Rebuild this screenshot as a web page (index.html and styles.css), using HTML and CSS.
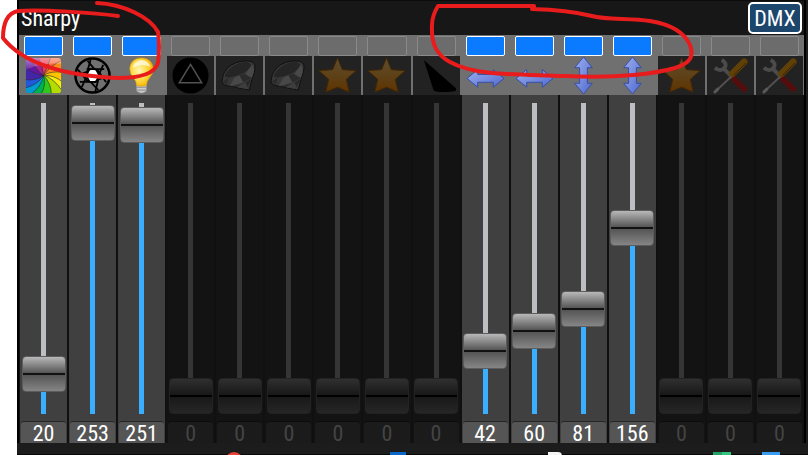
FILE: index.html
```html
<!DOCTYPE html>
<html lang="en">
<head>
<meta charset="UTF-8">
<meta name="viewport" content="width=device-width, initial-scale=1.0">
<title>Sharpy</title>
<link rel="stylesheet" href="styles.css">
</head>
<body>
<svg class="defs" aria-hidden="true">
    <defs>
        <linearGradient id="arrow-fill" x1="0" y1="0" x2="1" y2="1">
            <stop offset="0" stop-color="#9db0f0"/>
            <stop offset="1" stop-color="#4f68cc"/>
        </linearGradient>
        <linearGradient id="star-fill" x1="0" y1="0" x2="0" y2="1">
            <stop offset="0" stop-color="#e8c478"/>
            <stop offset="1" stop-color="#ee8200"/>
        </linearGradient>
        <radialGradient id="bulb-fill" cx=".4" cy=".45" r=".6">
            <stop offset="0" stop-color="#fff6b8"/>
            <stop offset=".5" stop-color="#ffdf50"/>
            <stop offset="1" stop-color="#f8b400"/>
        </radialGradient>
        <linearGradient id="gloss" x1="0" y1="0" x2="0" y2="1">
            <stop offset="0" stop-color="#fff" stop-opacity=".45"/>
            <stop offset="1" stop-color="#fff" stop-opacity=".1"/>
        </linearGradient>
        <clipPath id="square"><rect x="2" y="2" width="36" height="36" rx="3"/></clipPath>
    </defs>
    <symbol id="color" viewBox="0 0 40 40">
        <g clip-path="url(#square)" stroke="#222" stroke-opacity=".55" stroke-width=".7">
            <path fill="#e8384f" d="M20 20Q19 9 14 0H28Q25 10 20 20z"/>
            <path fill="#fb6540" d="M20 20Q25 10 28 0H40V4Q28 9 20 20z"/>
            <path fill="#ff8c1a" d="M20 20Q28 9 40 4V17Q28 15 20 20z"/>
            <path fill="#ffc400" d="M20 20Q28 15 40 17V27Q30 19 20 20z"/>
            <path fill="#f4ee10" d="M20 20Q30 19 40 27V37Q30 22 20 20z"/>
            <path fill="#b4dc00" d="M20 20Q30 22 40 37V40H28Q28 28 20 20z"/>
            <path fill="#2fc91c" d="M20 20Q28 28 28 40H17Q23 30 20 20z"/>
            <path fill="#00b44c" d="M20 20Q23 30 17 40H6Q18 32 20 20z"/>
            <path fill="#009bd0" d="M20 20Q18 32 6 40H0V33Q14 30 20 20z"/>
            <path fill="#2159dc" d="M20 20Q14 30 0 33V24Q12 26 20 20z"/>
            <path fill="#4325a8" d="M20 20Q12 26 0 24V10Q10 19 20 20z"/>
            <path fill="#6417a0" d="M20 20Q10 19 0 10V0H5Q12 14 20 20z"/>
            <path fill="#9d2493" d="M20 20Q12 14 5 0H14Q19 9 20 20z"/>
        </g>
        <path fill="url(#gloss)" d="M2 5q0-3 3-3h30q3 0 3 3v3Q20 6 2 14z"/>
    </symbol>
    <symbol id="iris" viewBox="0 0 40 40">
        <circle cx="20" cy="20" r="6" fill="#fff"/>
        <g fill="none" stroke="#000" stroke-width="1.800">
            <circle cx="20" cy="20" r="17.500" stroke-width="2.600"/>
            <path d="M17 13.500h6.500L27 20l-3.500 6.500H17L13.500 20z"/>
            <path d="M14 13.500H32M25 14L34 27M27 20L23 36M24 26.500H7M16 27L5 14M13.500 20L18 4"/>
            <path d="M22 13.500L15 5M27 18L31 9M26 24L36 21M18 26.500L26 35M13.500 22L9 32M15 16L4 20"/>
        </g>
    </symbol>
    <symbol id="bulb" viewBox="0 0 40 40">
        <path fill="#ccc" stroke="#999" stroke-width=".5" d="M15 29h10v7q-5 4-10 0z"/>
        <path stroke="#888" d="M15 32h10M15 35h10"/>
        <path fill="url(#bulb-fill)" stroke="#dfa000" stroke-width=".6" d="M15 30q0-4-3.500-8Q8 18 8 13.500C8 6 13.500 2 20 2s12 4 12 11.500q0 4.500-3.500 8.500Q25 26 25 30q-5 2-10 0z"/>
        <path fill="#fff" fill-opacity=".7" d="M11 12q1-7 9-8 7 0 9 7-9-4-18 1z"/>
    </symbol>
    <symbol id="prism" viewBox="0 0 40 40">
        <circle cx="20" cy="20" r="18.500"/>
        <path fill="none" stroke="#ccc" stroke-width="1.500" d="M20 8.500L31.500 27.500h-23z"/>
    </symbol>
    <symbol id="gem" viewBox="0 0 40 40">
        <path fill="#8a8a8a" stroke="#222" stroke-linejoin="round" d="M2 26Q2 18 8 12 16 5 27 5q9 0 9 6 0 6-3 12l-3 12-19-4q-8 0-9-5z"/>
        <path fill="#5c5c5c" d="M5 19Q12 7 27 6q8 2 3 7-7 7-21 9-5 0-4-3z"/>
        <path fill="#b5b5b5" d="M20 20l4 7-14 4 5-9zM29 14l4-5 2 5-2 8-7-3z"/>
        <path fill="#6c6c6c" d="M3 26l6-4-2 8zM25 18l7 5-8 4-4-7z"/>
        <path fill="#656565" d="M11 31q12-1 22-8l-5 9z"/>
        <path fill="#999" d="M17 32l9-5 3 7z"/>
    </symbol>
    <symbol id="star" viewBox="0 0 40 40">
        <path fill="url(#star-fill)" stroke="#a86000" stroke-linejoin="round" d="M20 2l5 12 14 1-10 9 3 13-12-5-12 5 3-13L1 15l14-1z"/>
    </symbol>
    <symbol id="frost" viewBox="0 0 40 40">
        <path d="M7 4l34 30q0 3-12 3-11 0-12-2z"/>
    </symbol>
    <symbol id="pan" viewBox="0 0 40 40">
        <path fill="url(#arrow-fill)" stroke="#354da8" stroke-linejoin="round" d="M1 23l11-9v5h16v-5l11 9-11 9v-5H12v5z"/>
    </symbol>
    <symbol id="tilt" viewBox="0 0 40 40">
        <path fill="url(#arrow-fill)" stroke="#354da8" stroke-linejoin="round" d="M20 1l9 11h-5v16h5l-9 11-9-11h5V12h-5z"/>
    </symbol>
    <symbol id="tools" viewBox="0 0 40 40">
        <path stroke="#d02020" stroke-width="6" stroke-linecap="round" d="M22 22l12 12"/>
        <path stroke="#bbb" stroke-width="4" d="M12 12l10 10"/>
        <path fill="none" stroke="#bbb" stroke-width="4" d="M11 4q6 3 3 8-4 5-10 0"/>
        <path stroke="#ccc" stroke-width="2" d="M22 20L7 34"/>
        <path stroke="#ddd" stroke-width="3" stroke-linecap="round" d="M7 34l-3 3"/>
        <path stroke="#f0a010" stroke-width="7" stroke-linecap="round" d="M22 18L34 6"/>
        <path stroke="#8b5500" stroke-width="1" d="M23 20L36 7"/>
    </symbol>
</svg>

<div class="screen">
    <main class="console">
        <header class="top">
            <h1>Sharpy</h1>
            <button type="button" class="dmx">DMX</button>
        </header>
        <div class="channels"></div>
    </main>
    <footer class="taskbar">
        <span class="app red"></span>
        <span class="app navy"></span>
        <span class="app paper"></span>
        <span class="app green"></span>
        <span class="app blue"></span>
    </footer>
    <svg class="marks" viewBox="0 0 808 90" aria-hidden="true">
        <path d="M97 3C123 4 150 17 158 32Q160 46 158 63C155 73 143 78 118 78C72 76 25 66 3 38Q3 14 18 11C40 9 96 13 118 16"/>
        <path d="M534 8V6H438Q432 16 432 25C431 45 437 55 450 62C475 76 515 74 565 76C620 79 657 73 675 68C691 63 694 56 690 45C684 31 668 24 650 21C630 18 606 20 592 16Q568 10 532 9"/>
    </svg>
</div>

<script>
const channels = [
    ['color', 'Color', 20], ['iris', 'Shutter', 253], ['bulb', 'Dimmer', 251],
    ['prism', 'Prism', 0], ['gem', 'Gobo', 0], ['gem', 'Gobo rotation', 0],
    ['star', 'Effect 1', 0], ['star', 'Effect 2', 0], ['frost', 'Frost', 0],
    ['pan', 'Pan', 42], ['pan', 'Pan fine', 60],
    ['tilt', 'Tilt', 81], ['tilt', 'Tilt fine', 156],
    ['star', 'Effect 3', 0], ['tools', 'Reset', 0], ['tools', 'Lamp', 0]
];

const wrap = document.querySelector('.channels');

wrap.innerHTML = channels.map(function ([icon, name, value], i) {
    const on = value > 0;
    return `<section class="channel ${on ? 'on' : ''}">
        <div class="led_wrap"><button type="button" class="led" aria-label="${name} on" aria-pressed="${on}"></button></div>
        <label class="icon" for="ch${i}" aria-label="${name}"><svg><use href="#${icon}"/></svg></label>
        <div class="fader"><input type="range" id="ch${i}" min="0" max="255" value="${value}" style="--level: ${value / 255}"></div>
        <output class="value" for="ch${i}">${value}</output>
    </section>`;
}).join('');

wrap.addEventListener('input', function (ev) {
    const channel = ev.target.closest('.channel');
    ev.target.style.setProperty('--level', ev.target.value / 255);
    channel.querySelector('.value').textContent = ev.target.value;
});

wrap.addEventListener('click', function (ev) {
    if (!ev.target.classList.contains('led')) return;
    const on = ev.target.closest('.channel').classList.toggle('on');
    ev.target.setAttribute('aria-pressed', on);
});
</script>
</body>
</html>
```

FILE: styles.css
```css
* {margin: 0; padding: 0; box-sizing: border-box;}
body {
    background: #fff;
    font-family: "Roboto Condensed", "Liberation Sans Narrow", Roboto, sans-serif;
    font-size: 22px;
    color: #fff;
    overflow: hidden;
}
.defs {
    position: absolute;
    width: 0;
    height: 0;
}
.screen {
    position: relative;
    padding-left: 17px;
}
.console {
    background: #171717;
    border: solid #000;
    border-width: 0 2px;
    box-shadow: 2px 0 #1c1c1c;
    margin-right: 2px;
}
.top {
    display: flex;
    justify-content: space-between;
    align-items: center;
    height: 35px;
    padding: 0 2px;
    border-top: 1px solid #0c0c0c;
}
.top h1 {
    font-size: 22px;
    font-weight: 400;
}
.top .dmx {
    width: 54px;
    height: 32px;
    background: #1d466d;
    border: 2px solid #fff;
    border-radius: 5px;
    color: #fff;
    font: inherit;
}
.channels {
    display: grid;
    grid-template-columns: repeat(16, minmax(0, 1fr));
    gap: 2px;
    padding: 0 1px;
    background: linear-gradient(#707070 60px, #101010 60px);
}
.channel {
    background: #131313;
}
.led_wrap {
    height: 21px;
    padding: 1px 4px 0;
    background: #707070;
}
.led {
    display: block;
    width: 100%;
    height: 20px;
    background: #6c6c6c;
    border: 1px solid #8a8a8a;
    border-radius: 2px;
}
.icon {
    display: flex;
    justify-content: center;
    height: 39px;
    background: #222;
}
.icon svg {
    width: 39px;
    height: 39px;
    filter: brightness(.4);
}
.fader {
    display: flex;
    justify-content: center;
    height: 326px;
    padding-top: 8px;
}
.fader input {
    -webkit-appearance: none;
    appearance: none;
    writing-mode: vertical-lr;
    direction: rtl;
    width: 44px;
    height: 311px;
    background: none;
    --rail: #353535;
    --fill: #353535;
}
.fader input::-webkit-slider-runnable-track {
    width: 44px;
    height: 311px;
    background: linear-gradient(to top, var(--fill) calc(18px + var(--level) * 275px), var(--rail) 0) center / 5px 100% no-repeat;
}
.fader input::-webkit-slider-thumb {
    -webkit-appearance: none;
    width: 44px;
    height: 36px;
    border: 1px solid #222;
    border-radius: 4px;
    background: linear-gradient(#303030, #181818 47%, #000 47%, #000 53%, #191919 53%, #262626);
}
.value {
    display: block;
    height: 22px;
    margin: 0 1px;
    border-top: 1px solid #0b0b0b;
    border-radius: 3px 3px 0 0;
    background: #1b1b1b;
    color: #444;
    line-height: 24px;
    text-align: center;
}
.on {
    background: #404040;
}
.on .led {
    background: #0a7aff;
    border-color: #fff;
}
.on .icon {
    background: #707070;
}
.on .icon svg {
    filter: none;
}
.on .fader input {
    --rail: #bcbec1;
    --fill: #3aaeff;
}
.on .fader input::-webkit-slider-thumb {
    border-color: #5c5c5c;
    background: linear-gradient(#b8b8b8, #555 47%, #111 47%, #111 53%, #555 53%, #858585);
}
.on .value {
    background: #555;
    border-color: #252525;
    color: #fff;
}
.taskbar {
    display: grid;
    grid-template-columns: 208fr 165fr 158fr 165fr 49fr 46fr;
    height: 12px;
    padding-top: 9px;
    overflow: hidden;
    background: linear-gradient(#1c1c1c 11px, #080808 11px);
}
.app {
    width: 18px;
    height: 18px;
}
.app.red {
    grid-column: 2;
    border-radius: 50%;
    background: #ea4335;
}
.app.navy {
    width: 16px;
    background: #0867c4;
}
.app.paper {
    width: 14px;
    border-radius: 0 4px 0 0;
    background: #f4f4f4;
}
.app.green {
    background: linear-gradient(90deg, #21a366 50%, #33c481 50%);
}
.app.blue {
    background: #3a9cf0;
}
.marks {
    position: absolute;
    left: 0;
    top: 0;
    width: 100%;
    fill: none;
    stroke: #e81c1c;
    stroke-width: 4;
    stroke-linecap: round;
    stroke-linejoin: round;
    pointer-events: none;
}
```
